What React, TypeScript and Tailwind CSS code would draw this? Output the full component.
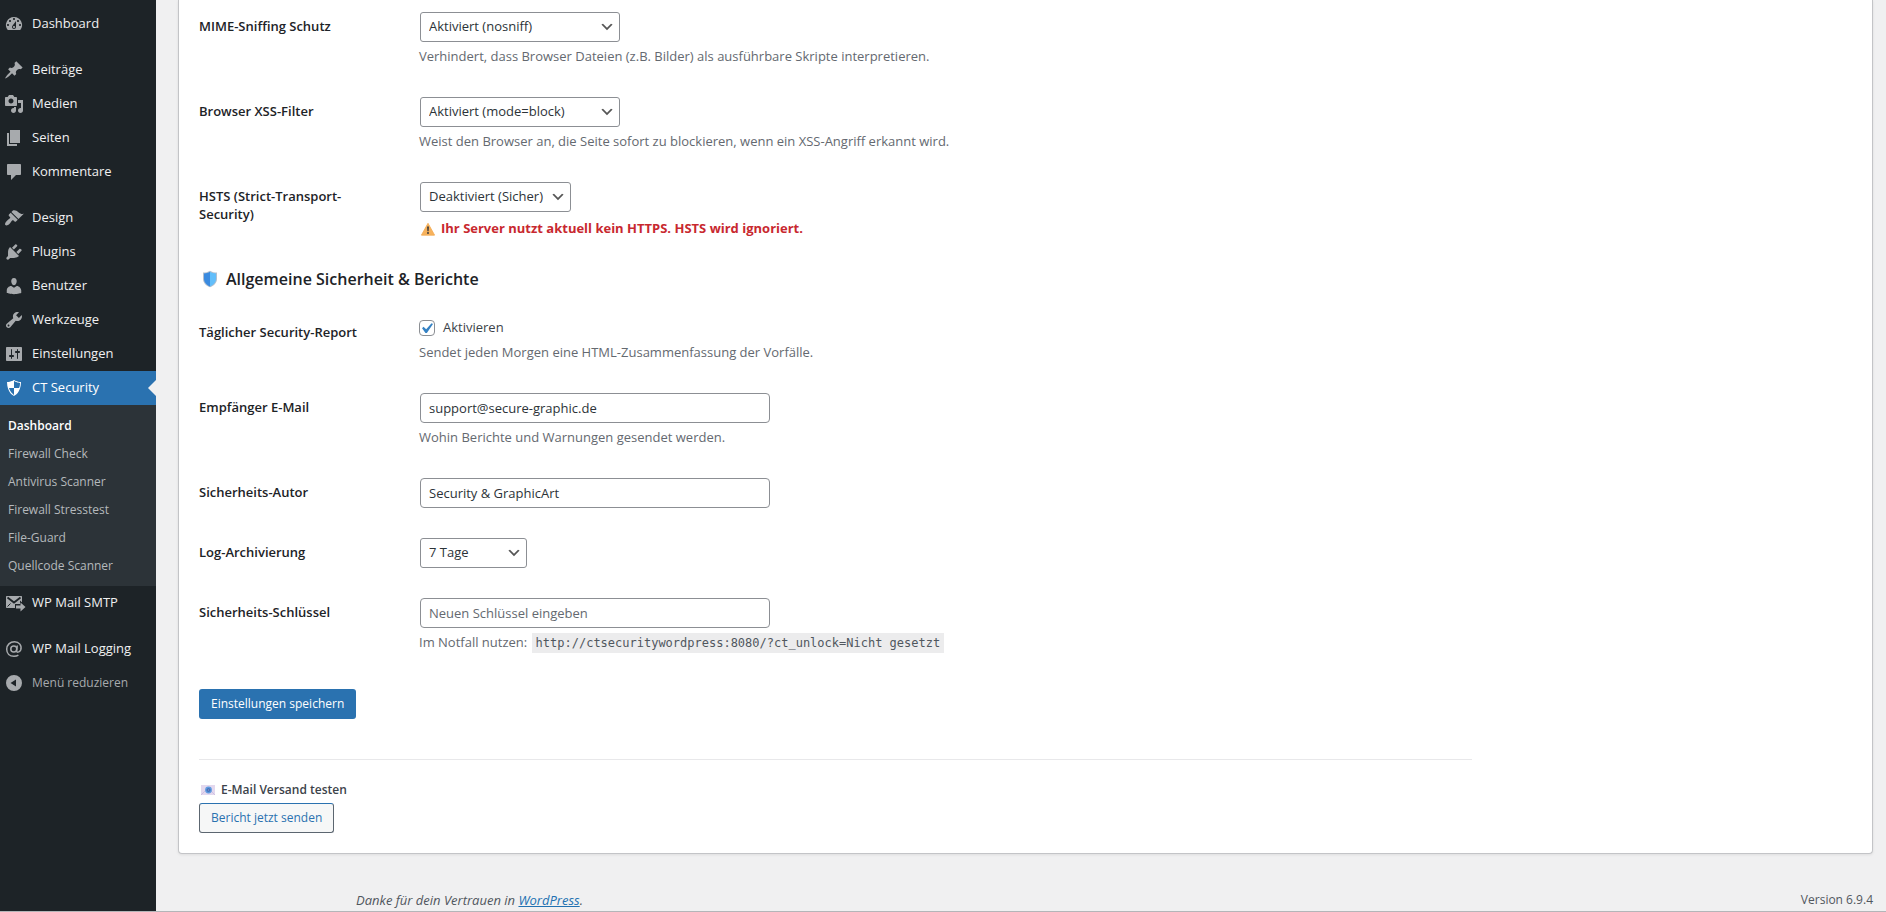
import type { ReactNode } from "react";
import clsx from "clsx";

type MenuEntry = {
  label: string;
  icon: ReactNode;
  gap?: boolean;
};

const Glyph = ({ children }: { children: ReactNode }) => (
  <svg
    viewBox="0 0 20 20"
    className="size-5 shrink-0 overflow-visible"
    fill="currentColor"
    fillRule="evenodd"
    aria-hidden="true"
  >
    {children}
  </svg>
);

const menuTop: MenuEntry[] = [
  {
    label: "Dashboard",
    icon: <path d="M3.76 16h12.48A7.998 7.998 0 0 0 10 3a7.998 7.998 0 0 0-6.24 13zM10 4c.55 0 1 .45 1 1s-.45 1-1 1-1-.45-1-1 .45-1 1-1zM6 6c.55 0 1 .45 1 1s-.45 1-1 1-1-.45-1-1 .45-1 1-1zm8 0c.55 0 1 .45 1 1s-.45 1-1 1-1-.45-1-1 .45-1 1-1zm-5.37 5.55L12 7v6c0 1.1-.9 2-2 2s-2-.9-2-2c0-.57.24-1.08.63-1.45zM4 10c.55 0 1 .45 1 1s-.45 1-1 1-1-.45-1-1 .45-1 1-1zm12 0c.55 0 1 .45 1 1s-.45 1-1 1-1-.45-1-1 .45-1 1-1zm-5 3c0-.55-.45-1-1-1s-1 .45-1 1 .45 1 1 1 1-.45 1-1z" />,
  },
  {
    label: "Beiträge",
    gap: true,
    icon: <path d="M10.44 3.02l1.82-1.82 6.36 6.35-1.83 1.82c-1.05-.68-2.48-.57-3.41.36l-.75.75c-.92.93-1.04 2.35-.35 3.41l-1.83 1.82-2.41-2.41-2.8 2.79c-.42.42-3.38 2.71-3.8 2.29s1.86-3.39 2.28-3.81l2.79-2.79L4.1 9.36l1.83-1.82c1.05.69 2.48.57 3.4-.36l.75-.75c.93-.92 1.05-2.35.36-3.41z" />,
  },
  {
    label: "Medien",
    icon: <path d="M13 11V4c0-.55-.45-1-1-1h-1.67L9 1H5L3.67 3H2c-.55 0-1 .45-1 1v7c0 .55.45 1 1 1h10c.55 0 1-.45 1-1zM7 4.5c1.38 0 2.5 1.12 2.5 2.5S8.38 9.5 7 9.5 4.5 8.38 4.5 7 5.62 4.5 7 4.5zM14 6h5v10.5c0 1.38-1.12 2.5-2.5 2.5S14 17.88 14 16.5s1.12-2.5 2.5-2.5c.17 0 .34.02.5.05V9h-3V6zm-4 8.05V13h2v3.5c0 1.38-1.12 2.5-2.5 2.5S7 17.88 7 16.5 8.12 14 9.5 14c.17 0 .34.02.5.05z" />,
  },
  {
    label: "Seiten",
    icon: <path d="M6 15V2h10v13H6zm-1 1h8v2H3V5h2v11z" />,
  },
  {
    label: "Kommentare",
    icon: <path d="M4 2h12c.55 0 1 .45 1 1v9c0 .55-.45 1-1 1h-4l-5 5v-5H4c-.55 0-1-.45-1-1V3c0-.55.45-1 1-1z" />,
  },
  {
    label: "Design",
    gap: true,
    icon: <path d="M14.48 11.06L7.41 3.99l1.5-1.5c.5-.56 2.3-.47 3.51.32 1.21.8 1.43 1.28 2.91 2.1 1.18.64 2.45 1.26 4.45.85zm-.71.71L6.7 4.7 4.93 6.47c-.39.39-.39 1.02 0 1.41l1.06 1.06c.39.39.39 1.03 0 1.42-.6.6-1.43 1.11-2.21 1.69-.35.26-.7.53-1.01.84C1.43 14.23.4 16.08 1.4 17.07c.99 1 2.84-.03 4.18-1.36.31-.31.58-.66.85-1.02.57-.78 1.08-1.61 1.69-2.21.39-.39 1.02-.39 1.41 0l1.06 1.06c.39.39 1.02.39 1.41 0z" />,
  },
  {
    label: "Plugins",
    icon: <path d="M13.11 4.36L9.87 7.6 8 5.73l3.24-3.24c.35-.34 1.05-.2 1.56.32.52.51.66 1.21.31 1.55zm-8 1.77l.91-1.12 9.01 9.01-1.19.84c-.71.71-2.63 1.16-3.82 1.16H6.14L4.9 17.26c-.59.59-1.54.59-2.12 0-.59-.58-.59-1.53 0-2.12l1.24-1.24v-3.88c0-1.13.4-3.19 1.09-3.89zm7.26 3.97l3.24-3.24c.34-.35 1.04-.21 1.55.31.52.51.66 1.21.31 1.55l-3.24 3.25z" />,
  },
  {
    label: "Benutzer",
    icon: <path d="M10 9.25c-2.27 0-2.73-3.44-2.73-3.44C7 4.02 7.82 2 9.97 2c2.16 0 2.98 2.02 2.71 3.81 0 0-.41 3.44-2.68 3.44zm0 2.57L12.72 10c2.39 0 4.52 2.33 4.52 4.53v2.49s-3.65 1.13-7.24 1.13c-3.65 0-7.24-1.13-7.24-1.13v-2.49c0-2.25 1.94-4.48 4.47-4.48z" />,
  },
  {
    label: "Werkzeuge",
    icon: <path d="M16.68 9.77c-1.34 1.34-3.3 1.67-4.95.99l-5.41 6.52c-.99.99-2.59.99-3.58 0s-.99-2.59 0-3.57l6.52-5.42c-.68-1.65-.35-3.61.99-4.95 1.28-1.28 3.12-1.62 4.72-1.06l-2.89 2.89 2.82 2.82 2.86-2.87c.53 1.58.18 3.39-1.08 4.65zM3.81 16.21c.4.39 1.04.39 1.43 0 .4-.4.4-1.04 0-1.43-.39-.4-1.03-.4-1.43 0-.39.39-.39 1.03 0 1.43z" />,
  },
  {
    label: "Einstellungen",
    icon: <path d="M18 16V4c0-.55-.45-1-1-1H3c-.55 0-1 .45-1 1v12c0 .55.45 1 1 1h14c.55 0 1-.45 1-1zM8 11h1c.55 0 1 .45 1 1s-.45 1-1 1H8v1.5c0 .28-.22.5-.5.5s-.5-.22-.5-.5V13H6c-.55 0-1-.45-1-1s.45-1 1-1h1V5.5c0-.28.22-.5.5-.5s.5.22.5.5V11zm5-2h-1c-.55 0-1-.45-1-1s.45-1 1-1h1V5.5c0-.28.22-.5.5-.5s.5.22.5.5V7h1c.55 0 1 .45 1 1s-.45 1-1 1h-1v5.5c0 .28-.22.5-.5.5s-.5-.22-.5-.5V9z" />,
  },
];

const menuBottom: MenuEntry[] = [
  {
    label: "WP Mail SMTP",
    icon: (
      <>
        <path d="M3 3h14c.6 0 1 .4 1 1v10c0 .6-.4 1-1 1H3c-.6 0-1-.4-1-1V4c0-.6.4-1 1-1z" />
        <path d="M3.500 4.500L10 9.500l6.500-5" fill="none" stroke="#1d2327" strokeWidth="1.800" />
        <path d="M3.500 13.500l3-3" fill="none" stroke="#1d2327" />
        <path d="M11 11h5V7.500l7 6.500-7 6.500V17h-5z" fill="#1d2327" />
        <path d="M12 12.500h4.500V9.500L21.500 14l-5 4.500v-3H12z" />
      </>
    ),
  },
  {
    label: "WP Mail Logging",
    gap: true,
    icon: (
      <g fill="none" stroke="currentColor" strokeWidth="1.500">
        <circle cx="9.800" cy="10" r="3" />
        <path d="M13.300 6.500l-.8 5.200c-.2 2 3.200 2 4.200-.6C18.200 6.400 15 2.700 10.500 2.700 6 2.700 2.700 6 2.700 10.200c0 4.300 3 7.100 7.300 7.100 1.800 0 3.200-.4 4.400-1.100" />
      </g>
    ),
  },
];

const submenu = ["Dashboard", "Firewall Check", "Antivirus Scanner", "Firewall Stresstest", "File-Guard", "Quellcode Scanner"];

const MenuItem = ({ label, icon, gap }: MenuEntry) => (
  <li className={clsx(gap && "mt-3")}>
    <a href="#" className="flex h-[34px] items-center gap-2 pl-1 text-[#f0f0f1]">
      <span className="text-[#a7aaad]">
        <Glyph>{icon}</Glyph>
      </span>
      {label}
    </a>
  </li>
);

const Sidebar = () => (
  <nav className="w-[156px] shrink-0 bg-[#1d2327] pt-[7px]">
    <ul>
      {menuTop.map((item) => (
        <MenuItem key={item.label} {...item} />
      ))}
      <li>
        <a href="#" className="relative flex h-[34px] items-center gap-2 bg-[#2a72b0] pl-1 text-white">
          <Glyph>
            <path d="M10 2s3 2 7 2c0 11-7 14-7 14S3 15 3 4c4 0 7-2 7-2zm0 8h5s1-1 1-5c0 0-5-1-6-2v7H5c1 4 5 7 5 7v-7z" />
          </Glyph>
          CT Security
          <span className="absolute top-1/2 right-0 size-0 -translate-y-1/2 border-8 border-transparent border-r-[#f0f0f1]" />
        </a>
        <ul className="bg-[#2c3338] pt-[7px] pb-[6px] text-[12px]">
          {submenu.map((label, i) => (
            <li key={label}>
              <a
                href="#"
                className={clsx("flex h-7 items-center pl-2", i === 0 ? "font-semibold text-white" : "text-[#b5b9bc]")}
              >
                {label}
              </a>
            </li>
          ))}
        </ul>
      </li>
      {menuBottom.map((item) => (
        <MenuItem key={item.label} {...item} />
      ))}
      <li>
        <button type="button" className="flex h-[34px] w-full items-center gap-2 pl-1 text-[12px] text-[#a7aaad]">
          <Glyph>
            <path d="M10 2a8 8 0 1 1 0 16 8 8 0 0 1 0-16zm2 4.500L6.500 10l5.500 3.500z" />
          </Glyph>
          Menü reduzieren
        </button>
      </li>
    </ul>
  </nav>
);

type RowProps = {
  id: string;
  label: string;
  note?: ReactNode;
  children: ReactNode;
};

const Row = ({ id, label, note, children }: RowProps) => (
  <div className="flex">
    <label htmlFor={id} className="w-[220px] shrink-0 py-5 pr-14 leading-[18px] font-semibold text-[#1d2327]">
      {label}
    </label>
    <div className="py-[15px]">
      {children}
      {note && <p className="mt-1 leading-[21px] text-[#646970]">{note}</p>}
    </div>
  </div>
);

const Select = ({ id, value, className }: { id: string; value: string; className: string }) => (
  <div className={clsx("relative ml-px", className)}>
    <select
      id={id}
      className="block h-[30px] w-full appearance-none rounded-[3px] border border-[#8c8f94] bg-white pr-6 pl-2 text-[#2c3338]"
    >
      <option>{value}</option>
    </select>
    <svg viewBox="0 0 20 20" className="pointer-events-none absolute top-[7px] right-[5px] size-4" aria-hidden="true">
      <path d="M5 6l5 5 5-5 2 1-7 7-7-7 2-1z" fill="#555" />
    </svg>
  </div>
);

const inputClass =
  "ml-px block h-[30px] w-[350px] rounded-[4px] border border-[#8c8f94] bg-white px-2 text-[#2c3338] placeholder:text-[#646970]";

const Warning = () => (
  <svg viewBox="0 0 16 16" className="ml-0.5 size-[14px] shrink-0" aria-hidden="true">
    <path d="M8 1.500L15.500 15H.5z" fill="#f7b25c" stroke="#f3ab55" strokeLinejoin="round" />
    <path d="M7 5h2l-.3 5.500H7.300z" fill="#37383d" />
    <circle cx="8" cy="12.500" r="1.100" fill="#37383d" />
  </svg>
);

const Shield = () => (
  <svg viewBox="0 0 16 18" className="ml-[3px] h-[18px] w-4 shrink-0" aria-hidden="true">
    <path d="M8 .8c2 1.400 4.500 1.700 7 1.700V9c0 4-3.500 7-7 8.300C4.500 16 1 13 1 9V2.500c2.500 0 5-.3 7-1.700z" fill="#b3bfce" />
    <path d="M8 1.800v14.600C5 15.200 2 12.500 2 9V3.400c2-.1 4.300-.6 6-1.600z" fill="#3a8be0" />
    <path d="M8 1.800v14.600c3-1.200 6-3.900 6-7.400V3.400c-2-.1-4.300-.6-6-1.600z" fill="#62befa" />
  </svg>
);

const MailIcon = () => (
  <svg viewBox="0 0 14 10" className="ml-0.5 h-[10px] w-[14px] shrink-0" aria-hidden="true">
    <path d="M0 0h14v10H0z" fill="#e3d8ee" />
    <path d="M0 10l5-5M14 10L9 5" stroke="#cfc0e2" />
    <circle cx="7.500" cy="5" r="3.400" fill="#5f9ae0" />
    <circle cx="7.500" cy="5" r="1.500" fill="#6f86c4" stroke="#3c6cb4" />
  </svg>
);

export default function App() {
  return (
    <div className="flex min-h-screen overflow-hidden border-b border-[#b4b5b8] bg-[#f0f0f1] font-['Open_Sans','Noto_Sans',sans-serif] text-[13px] text-[#3c434a]">
      <Sidebar />
      <main className="flex min-w-0 grow flex-col pr-[13px] pl-[22px]">
        <form
          className="flex flex-col rounded-b-[4px] border border-t-0 border-[#c3c4c7] bg-white px-5 pb-5 shadow-[0_1px_3px_rgba(0,0,0,0.08)]"
          onSubmit={(e) => e.preventDefault()}
        >
          <section className="-mt-[3px]">
            <Row id="mime" label="MIME-Sniffing Schutz" note="Verhindert, dass Browser Dateien (z.B. Bilder) als ausführbare Skripte interpretieren.">
              <Select id="mime" value="Aktiviert (nosniff)" className="w-[200px]" />
            </Row>
            <Row id="xss" label="Browser XSS-Filter" note="Weist den Browser an, die Seite sofort zu blockieren, wenn ein XSS-Angriff erkannt wird.">
              <Select id="xss" value="Aktiviert (mode=block)" className="w-[200px]" />
            </Row>
            <Row
              id="hsts"
              label="HSTS (Strict-Transport-Security)"
              note={
                <strong className="flex items-center gap-1.5 pt-[2px] font-bold text-[#c8282f]">
                  <Warning />
                  Ihr Server nutzt aktuell kein HTTPS. HSTS wird ignoriert.
                </strong>
              }
            >
              <Select id="hsts" value="Deaktiviert (Sicher)" className="w-[151px]" />
            </Row>
          </section>

          <h2 className="my-[11px] flex h-[27px] items-center gap-2 text-[16px] font-semibold text-[#1d2327]">
            <Shield />
            Allgemeine Sicherheit &amp; Berichte
          </h2>

          <section>
            <Row id="report" label="Täglicher Security-Report" note="Sendet jeden Morgen eine HTML-Zusammenfassung der Vorfälle.">
              <label className="flex h-5 items-center gap-2">
                <span className="relative size-4">
                  <input
                    id="report"
                    type="checkbox"
                    defaultChecked
                    className="peer block size-4 appearance-none rounded-[4px] border border-[#8c8f94] bg-white"
                  />
                  <svg
                    viewBox="0 0 20 20"
                    className="pointer-events-none absolute -top-[2px] -left-[3px] hidden size-[21px] peer-checked:block"
                    aria-hidden="true"
                  >
                    <path d="M14.830 4.890l1.340.940-5.810 8.380H9.020L5.780 9.670l1.340-1.250 2.570 2.400z" fill="#3582c4" />
                  </svg>
                </span>
                Aktivieren
              </label>
            </Row>
            <Row id="email" label="Empfänger E-Mail" note="Wohin Berichte und Warnungen gesendet werden.">
              <input id="email" type="email" defaultValue="support@secure-graphic.de" className={inputClass} />
            </Row>
            <Row id="author" label="Sicherheits-Autor">
              <input id="author" type="text" defaultValue="Security & GraphicArt" className={inputClass} />
            </Row>
            <Row id="logs" label="Log-Archivierung">
              <Select id="logs" value="7 Tage" className="w-[107px]" />
            </Row>
            <Row
              id="key"
              label="Sicherheits-Schlüssel"
              note={
                <>
                  Im Notfall nutzen:{" "}
                  <code className="mx-px bg-[#ececed] px-1 py-[3px] font-['DejaVu_Sans_Mono',monospace] text-[12px] text-[#50575e]">
                    http://ctsecuritywordpress:8080/?ct_unlock=Nicht gesetzt
                  </code>
                </>
              }
            >
              <input id="key" type="text" placeholder="Neuen Schlüssel eingeben" className={inputClass} />
            </Row>
          </section>

          <button
            type="submit"
            className="mt-5 h-[30px] self-start rounded-[3px] bg-[#2a72b0] px-3 text-[12px] text-white"
          >
            Einstellungen speichern
          </button>

          <hr className="mt-10 w-[77%] border-[#e8e8ea]" />

          <h3 className="mt-5 flex h-5 items-center gap-1.5 text-[12px] font-semibold">
            <MailIcon />
            E-Mail Versand testen
          </h3>
          <button
            type="button"
            className="mt-[3px] h-[30px] self-start rounded-[3px] border border-[#5c6670] border-t-[#2a72b0] bg-[#f6f7f7] px-[11px] text-[12px] text-[#2a72b0]"
          >
            Bericht jetzt senden
          </button>
        </form>

        <footer className="mt-auto flex items-center justify-between pb-px pl-[178px] text-[12px] leading-5 text-[#50575e]">
          <p className="text-[13px] italic">
            Danke für dein Vertrauen in{" "}
            <a href="#" className="text-[#2271b1] underline">
              WordPress
            </a>
            .
          </p>
          <p>Version 6.9.4</p>
        </footer>
      </main>
    </div>
  );
}
